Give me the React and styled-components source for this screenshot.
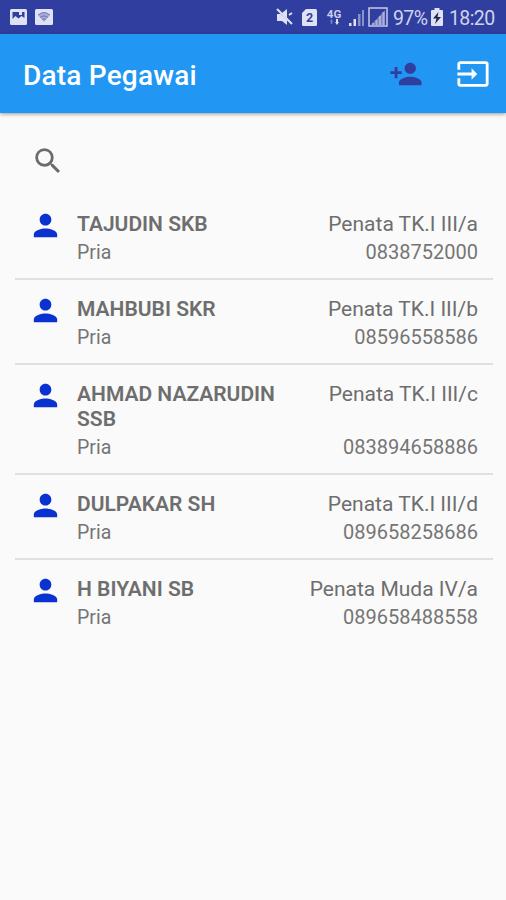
import React from "react";
import styled, { createGlobalStyle } from "styled-components";
import { MdInput, MdPerson, MdPersonAdd, MdSearch } from "react-icons/md";

const employees = [
  { name: "TAJUDIN SKB", gender: "Pria", rank: "Penata TK.I III/a", phone: "0838752000" },
  { name: "MAHBUBI SKR", gender: "Pria", rank: "Penata TK.I III/b", phone: "08596558586" },
  { name: "AHMAD NAZARUDIN SSB", gender: "Pria", rank: "Penata TK.I III/c", phone: "083894658886" },
  { name: "DULPAKAR SH", gender: "Pria", rank: "Penata TK.I III/d", phone: "089658258686" },
  { name: "H BIYANI SB", gender: "Pria", rank: "Penata Muda IV/a", phone: "089658488558" },
];

const App = () => (
  <Screen>
    <GlobalStyle />
    <StatusBar>
      <StatusGroup>
        <ImageIcon />
        <WifiIcon />
      </StatusGroup>
      <StatusGroup>
        <MuteIcon />
        <SimIcon />
        <NetworkType>
          4G
          <DataArrows />
        </NetworkType>
        <SignalIcon />
        <BoxedSignalIcon />
        <StatusText $width={34} $left={5}>97%</StatusText>
        <BatteryIcon />
        <StatusText $width={46}>18:20</StatusText>
      </StatusGroup>
    </StatusBar>
    <AppBar>
      <Title>Data Pegawai</Title>
      <Action $color="#303f9f">
        <MdPersonAdd />
      </Action>
      <Action $color="#ffffff">
        <MdInput />
      </Action>
    </AppBar>
    <SearchBar>
      <MdSearch />
    </SearchBar>
    <List>
      {employees.map((employee) => (
        <EmployeeRow key={employee.name} {...employee} />
      ))}
    </List>
  </Screen>
);

const EmployeeRow = ({ name, gender, rank, phone }) => (
  <Row>
    <Avatar>
      <MdPerson />
    </Avatar>
    <Details>
      <Line>
        <Name>{name}</Name>
        <Rank>{rank}</Rank>
      </Line>
      <SubLine>
        <Gender>{gender}</Gender>
        <span>{phone}</span>
      </SubLine>
    </Details>
  </Row>
);

const ImageIcon = () => (
  <StatusIcon $left={10} width="17" height="16" viewBox="0 0 17 16">
    <rect width="17" height="16" rx="1.5" fill="#dfe2f5" />
    <path d="M2.5 3h12v6l-3-2-3 2.5L5.500 7l-3 3z" fill="#303f9f" />
    <path d="M9 3h3v3H9z" fill="#dfe2f5" />
  </StatusIcon>
);

const WifiIcon = () => (
  <StatusIcon $left={8} width="18" height="16" viewBox="0 0 18 16">
    <rect width="18" height="16" rx="1.5" fill="#dfe2f5" />
    <path d="M3 6q6-5 12 0L9 13z" fill="#a5abd6" />
    <path d="M3 6q6-5 12 0M5 8.300q4-3 8 0M7 10.500q2-1.500 4 0" fill="none" stroke="#6f79bb" />
  </StatusIcon>
);

const MuteIcon = () => (
  <StatusIcon width="17" height="18" viewBox="0 0 17 18" fill="#dfe2f5">
    <path d="M1 6h3.500L11 12v5l-5-4H1zM6 5L11 1v9z" />
    <path d="M1 1l15 15M13 7l3-2" stroke="#dfe2f5" strokeWidth="2" />
  </StatusIcon>
);

const SimIcon = () => (
  <StatusIcon $left={9} width="15" height="17" viewBox="0 0 15 17">
    <path d="M4 0h9.500Q15 0 15 1.500v14q0 1.500-1.500 1.500h-12Q0 17 0 15.500V4z" fill="#dfe2f5" />
    <text x="7.500" y="13" textAnchor="middle" fill="#303f9f" fontSize="12.5" fontWeight="700">2</text>
  </StatusIcon>
);

const DataArrows = () => (
  <svg width="12" height="6" viewBox="0 0 12 6">
    <path d="M3.500 0L5 2.500H4.200V5H2.800V2.500H2z" fill="#7c87c5" />
    <path d="M8 0h2v3h1L9 6 7 3h1z" fill="#dfe2f5" />
  </svg>
);

const SignalIcon = () => (
  <StatusIcon $left={5} width="16" height="17" viewBox="0 0 16 17">
    <path d="M0 14h2.500v3H0zM4.500 10H7v7H4.500z" fill="#dfe2f5" />
    <path d="M9 5h2.500v12H9zM13 1h2v16h-2z" fill="#8991cb" />
  </StatusIcon>
);

const BoxedSignalIcon = () => (
  <StatusIcon $left={3} width="20" height="20" viewBox="0 0 20 20">
    <path d="M1 1h18v18H1z" fill="none" stroke="#c5c9e8" strokeWidth="1.500" />
    <path d="M3 18L17 3v15z" fill="#7781c2" />
    <path d="M5 16v2M8.500 13v5M12 9v9M15.500 5v13" stroke="#a9b0dc" strokeWidth="2" />
  </StatusIcon>
);

const BatteryIcon = () => (
  <StatusIcon $left={4} $right={6} width="12" height="18" viewBox="0 0 12 18">
    <path d="M3.500 0h5v2H11q1 0 1 1v14q0 1-1 1H1q-1 0-1-1V3q0-1 1-1h2.500z" fill="#dfe2f5" />
    <path d="M7.500 4L2 10.500h3.500L4 16l6-7H6.500z" fill="#20264d" />
  </StatusIcon>
);

const GlobalStyle = createGlobalStyle`
  body {
    margin: 0;
    background: #fafafa;
    font-family: Roboto, "Liberation Sans", sans-serif;
  }
`;

const Screen = styled.div`
  display: flex;
  flex-direction: column;
  height: 900px;
  overflow: hidden;
  background: #fafafa;
`;

const StatusBar = styled.div`
  display: flex;
  justify-content: space-between;
  height: 34px;
  padding-right: 11px;
  background: #303f9f;
  flex-shrink: 0;
`;

const StatusGroup = styled.div`
  display: flex;
  align-items: center;
`;

const StatusIcon = styled.svg`
  flex-shrink: 0;
  margin-left: ${({ $left = 0 }) => $left}px;
  margin-right: ${({ $right = 0 }) => $right}px;
`;

const NetworkType = styled.div`
  display: flex;
  flex-direction: column;
  align-items: center;
  width: 16px;
  margin-left: 9px;
  padding-right: 2px;
  color: #c9cdeb;
  font-size: 11.500px;
  font-weight: 700;
  line-height: 10px;
`;

const StatusText = styled.span`
  width: ${({ $width }) => $width}px;
  margin-left: ${({ $left = 0 }) => $left}px;
  padding-top: 3px;
  color: #cfd3ee;
  font-size: 19.500px;
  letter-spacing: -0.600px;
  line-height: 33px;
  white-space: nowrap;
`;

const AppBar = styled.header`
  display: flex;
  align-items: center;
  height: 79px;
  padding: 0 16px 0 23px;
  background: #2196f3;
  box-shadow: 0 1px 4px rgba(0, 0, 0, 0.4);
  flex-shrink: 0;
`;

const Title = styled.h1`
  flex: 1;
  margin: 4px 0 0;
  color: #ffffff;
  font-size: 28px;
  font-weight: 500;
  letter-spacing: 0.200px;
  line-height: 34px;
`;

const Action = styled.div`
  display: flex;
  margin-left: 33px;
  color: ${({ $color }) => $color};
  font-size: 34px;
`;

const SearchBar = styled.div`
  display: flex;
  height: 50px;
  padding: 31px 31px 0;
  color: #6b6b6b;
  font-size: 34px;
`;

const List = styled.div`
  padding: 1px 13px 0 15px;
`;

const Row = styled.div`
  display: flex;
  align-items: flex-start;
  padding: 17px 15px 14px 13px;
  border-bottom: 2px solid #e0e0e0;

  &:last-child {
    border-bottom: none;
  }
`;

const Avatar = styled.div`
  display: flex;
  margin: -4px 14px 0 0;
  color: #0a32d0;
  font-size: 35px;
  line-height: 0;
`;

const Details = styled.div`
  flex: 1;
`;

const Line = styled.div`
  display: flex;
  justify-content: space-between;
  color: #6e6e6e;
  font-size: 21px;
  line-height: 25px;
`;

const Name = styled.span`
  width: 210px;
  font-weight: 600;
`;

const Rank = styled.span`
  white-space: nowrap;
`;

const SubLine = styled.div`
  display: flex;
  justify-content: space-between;
  margin-top: 4px;
  color: #757575;
  font-size: 20px;
  line-height: 23px;
`;

const Gender = styled.span`
  font-size: 19.500px;
`;

export default App;
